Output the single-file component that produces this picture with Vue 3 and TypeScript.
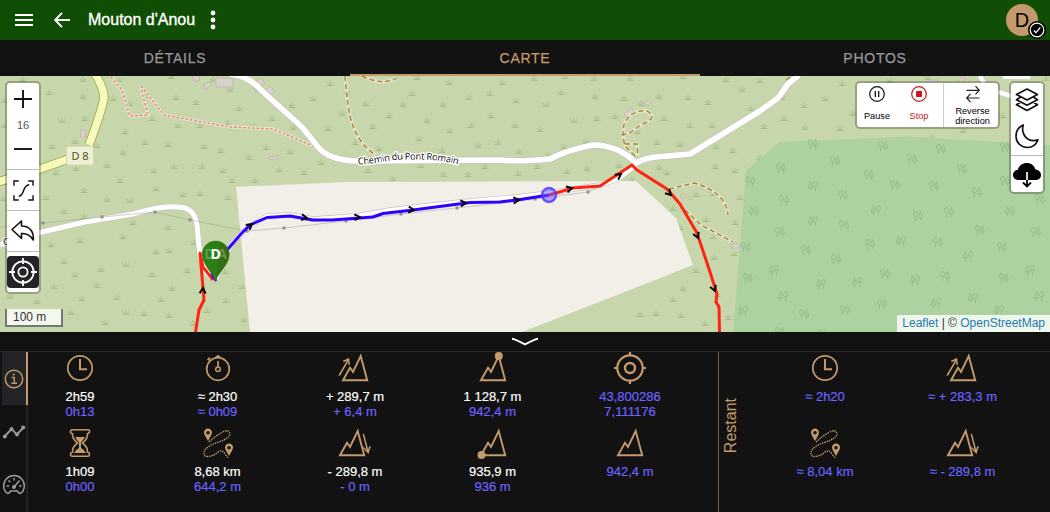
<script setup lang="ts">
type Point = [number, number]
type Arrow = [number, number, number]

interface Stat {
  icon: string
  total?: string
  current: string[]
}

const tabs = ['DÉTAILS', 'CARTE', 'PHOTOS']
const activeTab = 'CARTE'

const stats: Stat[] = [
  { icon: 'clock', total: '2h59', current: ['0h13'] },
  { icon: 'stopwatch', total: '≈ 2h30', current: ['≈ 0h09'] },
  { icon: 'ascent', total: '+ 289,7 m', current: ['+ 6,4 m'] },
  { icon: 'highest', total: '1 128,7 m', current: ['942,4 m'] },
  { icon: 'position', current: ['43,800286', '7,111176'] },
  { icon: 'hourglass', total: '1h09', current: ['0h00'] },
  { icon: 'distance', total: '8,68 km', current: ['644,2 m'] },
  { icon: 'descent', total: '- 289,8 m', current: ['- 0 m'] },
  { icon: 'lowest', total: '935,9 m', current: ['936 m'] },
  { icon: 'mountain', current: ['942,4 m'] },
]

const remaining: Stat[] = [
  { icon: 'clock', current: ['≈ 2h20'] },
  { icon: 'ascent', current: ['≈ + 283,3 m'] },
  { icon: 'distance', current: ['≈ 8,04 km'] },
  { icon: 'descent', current: ['≈ - 289,8 m'] },
]

const grass: Point[] = [
  [23, 79], [49, 92], [83, 79], [119, 79], [4, 100], [83, 96], [113, 98], [130, 103], [148, 95], [171, 76],
  [176, 97], [196, 102], [213, 79], [230, 89], [239, 108], [4, 125], [62, 120], [85, 118], [152, 118], [178, 125],
  [200, 125], [228, 122], [125, 131], [253, 125], [52, 146], [75, 141], [97, 145], [145, 142], [168, 144], [204, 146],
  [123, 152], [221, 150], [249, 157], [107, 165], [76, 168], [154, 170], [174, 166], [202, 166], [56, 172], [223, 170],
  [120, 180], [232, 180], [84, 190], [156, 188], [183, 194], [200, 193], [228, 197], [46, 197], [107, 199], [130, 200],
  [3, 198], [64, 211], [84, 216], [133, 222], [168, 227], [51, 244], [80, 240], [123, 236], [156, 251], [169, 250],
  [194, 242], [64, 261], [126, 264], [101, 269], [75, 274], [152, 274], [54, 286], [97, 285], [172, 288], [187, 270],
  [117, 297], [82, 298], [10, 296], [37, 301], [161, 299], [242, 286], [226, 300], [225, 271], [71, 312], [126, 312],
  [144, 313], [169, 315], [105, 322], [193, 323], [207, 310], [244, 319], [330, 83], [313, 98], [347, 92], [292, 105],
  [272, 118], [293, 127], [328, 128], [342, 113], [366, 103], [389, 115], [373, 126], [403, 104], [412, 93], [417, 77],
  [449, 82], [469, 97], [490, 93], [443, 104], [427, 120], [450, 130], [471, 125], [491, 115], [419, 138], [478, 145],
  [442, 150], [355, 142], [379, 148], [266, 147], [290, 151], [279, 169], [321, 162], [304, 172], [255, 180], [368, 170],
  [393, 178], [421, 165], [443, 174], [468, 174], [502, 82], [534, 78], [516, 100], [515, 125], [540, 129], [546, 104],
  [561, 92], [594, 78], [565, 76], [595, 96], [630, 78], [624, 98], [641, 103], [659, 96], [597, 118], [574, 120],
  [615, 116], [637, 131], [664, 118], [683, 76], [688, 97], [708, 102], [726, 79], [742, 89], [690, 125], [712, 125],
  [751, 108], [498, 142], [519, 151], [548, 154], [564, 146], [586, 141], [657, 142], [680, 144], [716, 146], [733, 150],
  [485, 166], [518, 173], [537, 166], [567, 171], [587, 168], [619, 165], [659, 167], [632, 179], [667, 172], [715, 166],
  [735, 170], [696, 194], [673, 208], [713, 193], [740, 197], [706, 219], [713, 236], [735, 222], [680, 227], [734, 253],
  [714, 257], [696, 270], [683, 288], [673, 299], [656, 313], [681, 315], [728, 317], [705, 323], [640, 314], [717, 294],
  [760, 80], [764, 126], [784, 118], [804, 105], [825, 98], [842, 83], [805, 127], [840, 128], [782, 97], [760, 157],
  [890, 80], [928, 77], [1046, 78], [1003, 115], [963, 130], [932, 137], [853, 113],
]

// Round crown on the left, pointed crown on the right
const mixedTrees: Point[] = [
  [843, 195], [895, 185], [934, 186], [977, 192], [1005, 181], [1040, 199], [918, 216], [949, 212], [844, 225],
  [980, 230], [1036, 232], [870, 244], [938, 242], [806, 250], [836, 259], [1002, 247], [885, 274], [945, 276],
  [1004, 278], [882, 304], [845, 310], [804, 314], [823, 334], [750, 181], [746, 247], [748, 278], [784, 200],
  [780, 232], [780, 332], [883, 146], [813, 144], [835, 161], [781, 168], [869, 175], [912, 159], [941, 149],
  [1005, 147], [962, 169],
]

// Pointed crown on the left, round crown on the right
const mirroredTrees: Point[] = [
  [813, 186], [876, 210], [1010, 211], [813, 221], [901, 241], [968, 256], [1030, 270], [915, 280], [857, 282],
  [821, 284], [973, 298], [1039, 296], [936, 303], [999, 310], [754, 211], [743, 311], [774, 270], [783, 296],
]

const pylons: Point[] = [
  [43, 223], [102, 217], [155, 212], [190, 220], [247, 231], [284, 228], [346, 221], [401, 214], [457, 208], [535, 199], [588, 192],
]

const arrows: Arrow[] = [
  [252, 224, -38], [307, 218, 8], [360, 217, -3], [414, 210, 5], [466, 203, -5], [519, 200, -5],
  [572, 188, -15], [621, 174, -35], [671, 195, 45], [698, 238, 68], [715, 291, 68], [203, 288, -86],
]
</script>

<template>
  <div class="app">
    <svg class="sprites" aria-hidden="true">
      <defs>
        <g id="grass" fill="none" stroke="#a9bf8c" stroke-width="1">
          <path d="M-3.5 2.5H3.5M0 2.5V-2.5M-.5 2L-3.2-.8M.5 2L3.2-.8" />
        </g>
        <g id="tree" fill="none" stroke="#93bf8a" stroke-width="1">
          <path d="M-2.5 5V1M2.5 5V2M.4 2L2.5-4.5L4.600 2Z" />
          <ellipse cx="-2.5" cy="-1.8" rx="2" ry="2.8" />
        </g>
        <path id="peak" d="M4 28.300L11 15.800L14 20L21.700 4L28.200 28.300Z" fill="none" stroke="currentColor" stroke-width="1.9" />
        <g id="clock" fill="none" stroke="currentColor">
          <circle cx="16" cy="16" r="12.2" stroke-width="1.7" />
          <path d="M16 7V17.3H23" stroke-width="2" />
        </g>
        <g id="stopwatch" fill="none" stroke="currentColor">
          <circle cx="16" cy="17" r="11.3" stroke-width="1.7" />
          <circle cx="16" cy="17.2" r="2.3" stroke-width="1.5" />
          <path d="M16 9V15M16 3V6M13.8 4.8H18.2M8.6 9L6.6 7M5.5 8L8 5.6" stroke-width="1.7" />
        </g>
        <g id="ascent">
          <use href="#peak" />
          <path d="M.2 23.500L9.200 8M4.300 9.500L9.500 7L10.200 13" fill="none" stroke="currentColor" stroke-width="1.5" />
        </g>
        <g id="descent">
          <use href="#peak" x="-3" />
          <path d="M24.300 7L29 24.500M24.500 20.500L29.200 25.500L31 19.300" fill="none" stroke="currentColor" stroke-width="1.5" />
        </g>
        <g id="highest">
          <use href="#peak" />
          <circle cx="21.8" cy="4" r="4" fill="currentColor" />
        </g>
        <g id="lowest">
          <use href="#peak" />
          <circle cx="4.5" cy="28" r="4" fill="currentColor" />
        </g>
        <use id="mountain" href="#peak" />
        <g id="position" fill="none" stroke="currentColor">
          <circle cx="16" cy="16" r="12.7" stroke-width="2.2" />
          <circle cx="16" cy="16" r="5" stroke-width="2.4" />
          <path d="M16 0V4M16 28V32M0 16H4M28 16H32" stroke-width="2.2" />
        </g>
        <g id="hourglass" fill="none" stroke="currentColor" stroke-width="1.6">
          <path d="M8 2.7H24Q26 3 25.5 5Q25 6.5 23.5 6.7Q24 12 18.5 16Q24 20 23.5 25.3Q25.5 25.5 25.5 27.5Q25.3 29.3 24 29.3H8Q6.3 29 6.4 27Q6.7 25.5 8.5 25.3Q8 20 13.5 16Q8 12 8.5 6.7Q6.5 6.5 6.4 5Q6.4 3 8 2.7Z" />
          <path d="M11 10H21Q19.5 13 17 15.2V21Q20 22.5 22 26H10Q12 22.5 15 21V15.2Q12.5 13 11 10Z" fill="currentColor" stroke="none" />
        </g>
        <g id="distance">
          <path
            d="M6 1.5A4 4 0 0 1 10 5.6C10 8 7.5 11 6 14C4.500 11 2 8 2 5.600A4 4 0 0 1 6 1.500ZM6 3.900A1.800 1.800 0 0 0 6 7.500A1.800 1.800 0 0 0 6 3.900Z"
            fill="currentColor"
            fill-rule="evenodd"
          />
          <path
            d="M27 16.500A4 4 0 0 1 31 20.600C31 23 28.500 26 27 29C25.500 26 23 23 23 20.600A4 4 0 0 1 27 16.500ZM27 18.900A1.800 1.800 0 0 0 27 22.500A1.800 1.800 0 0 0 27 18.900Z"
            fill="currentColor"
            fill-rule="evenodd"
          />
          <path
            d="M7 15Q12 10 19 6Q27 1 28 7Q28 11 17 15Q4 19 2 25Q1 31 9 29Q13 28 16 25Q20 22 23 27Q25 30 27 31"
            fill="none"
            stroke="currentColor"
            stroke-width="1.300"
            stroke-dasharray="1.500 .9"
          />
        </g>
      </defs>
    </svg>

    <header class="toolbar">
      <svg class="menu-icon" viewBox="0 0 18 12"><path d="M0 1H18M0 6H18M0 11H18" stroke="#fff" stroke-width="2" /></svg>
      <svg class="back-icon" viewBox="0 0 16 16"><path d="M8 .8L1.200 8L8 15.200M1.500 8H16" fill="none" stroke="#fff" stroke-width="1.900" /></svg>
      <h1>Mouton d'Anou</h1>
      <svg class="more-icon" viewBox="0 0 6 20">
        <g fill="#fff"><circle cx="3" cy="3" r="2.400" /><circle cx="3" cy="10" r="2.400" /><circle cx="3" cy="17" r="2.400" /></g>
      </svg>
      <div class="avatar">
        D
        <svg class="avatar-badge" viewBox="0 0 18 18">
          <circle cx="9" cy="9" r="9" fill="#000" />
          <circle cx="9" cy="9" r="6.800" fill="none" stroke="#fff" stroke-width="1.200" />
          <path d="M5.800 9.500L8 11.700L12.300 6.500" fill="none" stroke="#fff" stroke-width="1.200" />
        </svg>
      </div>
    </header>

    <nav class="tabs">
      <div v-for="tab in tabs" :key="tab" class="tab" :class="{ active: tab === activeTab }">{{ tab }}</div>
    </nav>

    <main class="map">
      <svg class="map-canvas" viewBox="0 76 1050 256">
        <rect y="76" width="1050" height="256" fill="#c8d7ab" />
        <use v-for="([x, y], i) in grass" :key="`g${i}`" href="#grass" :x="x" :y="y" />
        <path d="M236 187L345 182L636 181L676 218L693 265L640 286L522 332H250Z" fill="#f2efe9" />
        <path d="M746 171L779 142L907 136.500L1050 145V332H733Z" fill="#aed1a0" />
        <use v-for="([x, y], i) in mixedTrees" :key="`t${i}`" href="#tree" :x="x" :y="y" />
        <use v-for="([x, y], i) in mirroredTrees" :key="`m${i}`" href="#tree" :transform="`translate(${x} ${y}) scale(-1 1)`" />

        <g fill="#d9d0c9" stroke="#c3b3ad" stroke-width=".8">
          <path d="M216 78H233V87H216ZM192 76H199L200 80L195 82ZM203 85L210 82L212 85L205 89ZM256 82L260 78L265 83L260 86ZM266 90L270 86L275 91L270 95ZM80.500 130H85.500V137H80.500ZM269 157L278 155.500V158.500L270 160ZM624 114L631 108L634 112L627 117ZM644 103L649 100L651 103L646 106ZM681 194H685V198H681ZM731 244H739V248H731ZM688 198L690 197L692 199L690 200ZM929 80H938V84H929ZM961 76H965L962 83H959ZM254 89L256 88L258 91L256 92Z" />
        </g>

        <g fill="none" stroke="#e0e5cc" stroke-width="3.300" stroke-linejoin="round">
          <path d="M111 77L122 90L130 116L148 115L142 93V87L164 115L230 127L273 129L315 147" />
          <path d="M345 76Q347 101 350 116Q357 144 376 155M362 76Q382 86 397 78M635 156L625 146Q621 132 625 122Q633 109 647 111Q658 117 645 123Q637 127 630 133L622 135M625 144H637L638 156M669 189L694 183Q726 192 728 215M685 210L701 225L733 242" />
        </g>
        <path d="M111 77L122 90L130 116L148 115L142 93V87L164 115L230 127L273 129L315 147" fill="none" stroke="#f77d72" stroke-width="1.400" stroke-dasharray="2.500 2" />
        <path d="M345 76Q347 101 350 116Q357 144 376 155M362 76Q382 86 397 78M635 156L625 146Q621 132 625 122Q633 109 647 111Q658 117 645 123Q637 127 630 133L622 135M625 144H637L638 156M669 189L694 183Q726 192 728 215M685 210L701 225L733 242M786 80L790 77" fill="none" stroke="#ad822b" stroke-width="1.400" stroke-dasharray="5 3" />

        <g fill="none" stroke-linejoin="round">
          <g stroke="#c4c3bc">
            <path d="M0 245L40 232.500L85 222L133 214C155 208 168 205 183 207.500C195 210 197 221 197.500 230C199 248 200 261 205 270Q209 277 216 280" stroke-width="6.200" />
            <path d="M216 280Q218 266 228 250Q238 232 267 216L290 215L313 219L357 216L390 210L460 202L517 197L549 193L600 185L618 179L636 165" stroke-width="5.400" />
            <path d="M230 74L240 76Q252 80 261 90L302 127L318 147Q330 162 365 161L500 160Q520 162 550 159Q567 150 593 145Q618 145 636 163Q645 158 656 157L690 154L760 111L778 98L788 84L799 75" stroke-width="7" />
            <path d="M980 76L984 83M998 92L1014 97" stroke-width="6" />
          </g>
          <g stroke="#fff">
            <path d="M0 245L40 232.500L85 222L133 214C155 208 168 205 183 207.500C195 210 197 221 197.500 230C199 248 200 261 205 270Q209 277 216 280" stroke-width="5" />
            <path d="M216 280Q218 266 228 250Q238 232 267 216L290 215L313 219L357 216L390 210L460 202L517 197L549 193L600 185L618 179L636 165" stroke-width="4.200" />
            <path d="M230 74L240 76Q252 80 261 90L302 127L318 147Q330 162 365 161L500 160Q520 162 550 159Q567 150 593 145Q618 145 636 163Q645 158 656 157L690 154L760 111L778 98L788 84L799 75" stroke-width="5.600" />
            <path d="M980 76L984 83M998 92L1014 97M1003 76.500L1030 77" stroke-width="4.600" />
          </g>
          <path d="M95 74Q104 88 104 98Q102 110 89 145M70 158.500L40 169L-2 182" stroke="#a2a83c" stroke-width="9.200" />
          <path d="M95 74Q104 88 104 98Q102 110 89 145M70 158.500L40 169L-2 182" stroke="#f7fabf" stroke-width="7.600" />
          <path d="M0 227L43 223L102 217L155 212L190 220L247 231L284 228L346 221L401 214L457 208L535 199L588 192L602 186" stroke="#999" stroke-opacity=".6" stroke-width=".8" />
        </g>
        <rect v-for="([x, y], i) in pylons" :key="`p${i}`" :x="x - 1.5" :y="y - 1.5" width="3" height="3" fill="#928f8f" />

        <rect x="66.500" y="146.500" width="27" height="18.500" rx="1.500" fill="#eef0d5" stroke="#d4d9a6" />
        <text x="80" y="160" class="road-ref">D 8</text>
        <path id="street-name" d="M358 164.500C378 164 388 159.500 405 159.500S440 159 462 165.500" fill="none" />
        <text class="street"><textPath href="#street-name" textLength="101">Chemin du Pont Romain</textPath></text>
        <text x="3" y="245" class="street">C</text>

        <g fill="none" stroke-width="3" stroke-linejoin="round">
          <path d="M195.500 332L199 310L204 300L200 253L203 267L213 280M549 195L573 188L600 186L632 165L637 170L667 189L680 204L697 233L710 272L717 294L716 302L719 307L719.500 332" stroke="#ff2412" />
          <path d="M216 281L212 274L228 249L240 235L250 225L267 217.500L290 216L313 220H332L373 217L383 213.500L413 210L470 202.500L500 202L517 200L549 195" stroke="#3300ff" />
        </g>
        <g v-for="([x, y, angle], i) in arrows" :key="`a${i}`" :transform="`translate(${x} ${y}) rotate(${angle})`">
          <path d="M-5.500 -3L0 0L-5.500 3" fill="none" stroke="#000" stroke-width="1.900" />
        </g>
        <circle cx="549" cy="195" r="7" fill="#6b55ff" fill-opacity=".5" stroke="#4a35ff" stroke-opacity=".8" stroke-width="2.400" />

        <path d="M215.500 282C213 272 202 265 202 254.500A13.700 13.700 0 0 1 229.400 254.500C229.400 265 218 272 215.500 282Z" fill="#2a8017" />
        <path d="M220 243A13.700 13.700 0 0 1 229.400 254.500C229.400 265 220 270 216 279Z" fill="#3c6312" opacity=".6" />
        <text x="209.500" y="259" class="pin ghost">D</text>
        <text x="222" y="259" class="pin ghost">A</text>
        <text x="215.800" y="259" class="pin">D</text>
      </svg>

      <div class="control left-control">
        <div class="cell zoom-in"><svg viewBox="0 0 18 18"><path d="M0 9H18M9 0V18" stroke="#111" stroke-width="1.900" /></svg></div>
        <div class="cell zoom-level">16</div>
        <div class="cell zoom-out"><svg viewBox="0 0 18 18"><path d="M0 9H18" stroke="#111" stroke-width="1.900" /></svg></div>
        <div class="cell fit ruled">
          <svg viewBox="0 0 22 22" fill="none" stroke="#111" stroke-width="1.500">
            <path d="M1 6V1H6M16 1H21V6M21 16V21H16M6 21H1V16M6 17C13 16 9 6 17 5" />
          </svg>
        </div>
        <div class="cell undo ruled">
          <svg viewBox="0 0 24 22"><path d="M1 9.500L10.500 1V6C19 6 23 12 22.300 20Q18 13 10.500 13.500V18.500Z" fill="none" stroke="#111" stroke-width="1.600" stroke-linejoin="round" /></svg>
        </div>
        <div class="cell locate ruled">
          <span class="locate-button">
            <svg viewBox="0 0 28 28" fill="none" stroke="#fff">
              <circle cx="14" cy="14" r="10.700" stroke-width="1.800" />
              <circle cx="14" cy="14" r="4.600" stroke-width="1.800" />
              <path d="M14 0V6M14 22V28M0 14H6M22 14H28" stroke-width="1.800" />
            </svg>
          </span>
        </div>
      </div>

      <div class="scale">100 m</div>

      <div class="control trace-control">
        <div class="trace-action">
          <svg viewBox="0 0 16 16"><circle cx="8" cy="8" r="7.300" fill="none" stroke="#111" stroke-width="1.200" /><path d="M6.300 5V11M9.700 5V11" stroke="#111" stroke-width="1.300" /></svg>
          <span>Pause</span>
        </div>
        <div class="trace-action stop">
          <svg viewBox="0 0 16 16"><circle cx="8" cy="8" r="7.300" fill="none" stroke="#c5161b" stroke-width="1.200" /><rect x="5" y="5" width="6" height="6" rx="1" fill="#c5161b" /></svg>
          <span>Stop</span>
        </div>
        <div class="trace-action reverse">
          <svg viewBox="0 0 16 16" fill="none" stroke="#222" stroke-width="1.200"><path d="M1.500 4.300H14M10.500 .2L14.300 4.300L10.500 8.400M14.500 12H2M5.500 7.900L1.700 12L5.500 16.100" /></svg>
          <span>Reverse<br />direction</span>
        </div>
      </div>

      <div class="control layers-control">
        <div class="layer-cell">
          <svg viewBox="0 0 24 24" fill="none" stroke="#111" stroke-width="1.700" stroke-linejoin="round">
            <path d="M12 1L22.500 6.500L12 12L1.500 6.500ZM5 9.500L1.500 11.700L12 17.200L22.500 11.700L19 9.500M5 14.500L1.500 16.800L12 22.500L22.500 16.800L19 14.500" />
          </svg>
        </div>
        <div class="layer-cell">
          <svg viewBox="0 0 24 24"><path d="M8.300 1C7.500 3 7.300 5 8 8C9.500 14 15.500 18.500 23 15.800C21 21 17.500 23.500 12.500 23.500C6 23.500 1 18.500 1 12.500C1 7 3.500 3 8.300 1Z" fill="none" stroke="#111" stroke-width="1.700" stroke-linejoin="round" /></svg>
        </div>
        <div class="layer-cell download">
          <svg viewBox="0 0 28 26">
            <path d="M14 1C18 1 21.500 3.500 22.200 7.300C25.500 7.700 28 10 28 13C28 16.500 25.500 18 22.500 18H5.500C2.500 18 0 16 0 13C0 10 2.300 8 4.800 7.700C6 3.500 9.500 1 14 1Z" fill="#000" />
            <path d="M14 10V19" stroke="#fff" stroke-width="1.700" />
            <path d="M14 18V24M10 20.500L14 24.500L18 20.500" fill="none" stroke="#000" stroke-width="1.800" />
          </svg>
        </div>
      </div>

      <div class="attribution"><a>Leaflet</a> | © <a>OpenStreetMap</a></div>
    </main>

    <section class="panel">
      <div class="handle"><svg viewBox="0 0 26 8"><path d="M0 .8Q2 .8 13 6.300Q24 .8 26 .8" fill="none" stroke="#fff" stroke-width="1.900" /></svg></div>
      <div class="panel-body">
        <aside class="side-tabs">
          <div class="side-tab active">
            <svg viewBox="0 0 22 22" fill="none" stroke="currentColor"><circle cx="11" cy="11" r="8.700" stroke-width="1.400" /><path d="M8.700 9.500H11.300V15.300M8.300 15.300H14" stroke-width="1.400" /><circle cx="10.800" cy="6.500" r="1.100" fill="currentColor" stroke="none" /></svg>
          </div>
          <div class="side-tab">
            <svg viewBox="0 0 22 22" fill="currentColor"><path d="M1.500 15.500L8.500 8L14 13.500L20.500 6.500" fill="none" stroke="currentColor" stroke-width="1.900" /><circle cx="1.800" cy="15.400" r="2" /><circle cx="8.500" cy="8" r="2" /><circle cx="14" cy="13.500" r="2" /><circle cx="20.200" cy="6.600" r="2" /></svg>
          </div>
          <div class="side-tab">
            <svg viewBox="0 0 22 22" fill="none" stroke="currentColor" stroke-width="1.500">
              <path d="M4.500 19.500C1.500 17.500 .7 14.500 .7 11.800A10.300 10.300 0 0 1 21.300 11.800C21.300 14.500 20.500 17.500 17.500 19.500C15.500 19.500 15 18 14.500 17H7.500C7 18 6.500 19.500 4.500 19.500Z" />
              <path d="M11 4V6.500M3.500 12H6M16 12H18.500M5.500 6.500L7.300 8.300M11 13L16.500 6.500" /><circle cx="11" cy="13" r="1.300" fill="currentColor" />
            </svg>
          </div>
        </aside>
        <div class="stats">
          <div v-for="(stat, i) in stats" :key="i" class="stat">
            <svg viewBox="0 0 32 32"><use :href="`#${stat.icon}`" /></svg>
            <span v-if="stat.total" class="total">{{ stat.total }}</span>
            <span v-for="value in stat.current" :key="value">{{ value }}</span>
          </div>
        </div>
        <div class="remaining">
          <div class="remaining-title"><span>Restant</span></div>
          <div class="stats remaining-stats">
            <div v-for="(stat, i) in remaining" :key="i" class="stat">
              <svg viewBox="0 0 32 32"><use :href="`#${stat.icon}`" /></svg>
              <span v-for="value in stat.current" :key="value">{{ value }}</span>
            </div>
          </div>
        </div>
      </div>
    </section>
  </div>
</template>

<style>
body {
  background: #121212;
  overflow: hidden;
}
</style>

<style scoped>
.app {
  display: flex;
  flex-direction: column;
  width: 1050px;
  height: 512px;
  overflow: hidden;
  background: #121212;
  color: #fff;
  font-family: "Liberation Sans", Arial, sans-serif;
}
.app svg {
  display: block;
  flex: none;
  overflow: visible;
}
.app .sprites {
  position: absolute;
  width: 0;
  height: 0;
}
.toolbar {
  display: flex;
  align-items: center;
  flex: none;
  height: 40px;
  padding: 0 12px 0 15px;
  box-sizing: border-box;
  background: #104e05;
}
.menu-icon { width: 18px; height: 12px; }
.back-icon { width: 16px; height: 16px; margin-left: 21px; }
h1 {
  margin: 0 0 0 18px;
  width: 108px;
  font: 500 16px/20px "Liberation Sans", Arial, sans-serif;
  -webkit-text-stroke: 0.35px #fff;
  white-space: nowrap;
}
.more-icon { width: 6px; height: 20px; margin-left: 14px; }
.avatar {
  position: relative;
  width: 32px;
  height: 32px;
  margin-left: auto;
  border-radius: 50%;
  background: #c49a6c;
  color: #000;
  font-size: 20px;
  line-height: 32px;
  text-align: center;
}
.avatar-badge {
  position: absolute;
  left: 22px;
  top: 17px;
  width: 18px;
  height: 18px;
}
.tabs { display: flex; flex: none; height: 36px; }
.tab {
  flex: 1;
  box-sizing: border-box;
  border-bottom: 2px solid transparent;
  color: #999;
  font-size: 14px;
  line-height: 37px;
  letter-spacing: 0.75px;
  text-align: center;
  -webkit-text-stroke: 0.25px currentColor;
}
.tab.active { border-color: #c49a6c; color: #c49a6c; }
.map { position: relative; flex: none; height: 256px; overflow: hidden; }
.map-canvas { width: 1050px; height: 256px; }
.road-ref { font: 11px "Noto Sans", sans-serif; fill: #4d5515; text-anchor: middle; }
.street {
  font: 9.5px "Noto Sans", sans-serif;
  fill: #111;
  stroke: #fff;
  stroke-width: 2.5px;
  paint-order: stroke;
}
.pin { font: bold 14px "Open Sans", sans-serif; fill: #fff; text-anchor: middle; }
.pin.ghost { fill-opacity: 0.25; }
.control {
  position: absolute;
  box-sizing: border-box;
  border: 2px solid rgba(0, 0, 0, 0.25);
  border-radius: 5px;
  background: #fff;
  background-clip: padding-box;
  color: #000;
}
.left-control { left: 5px; top: 5px; width: 36px; height: 213px; }
.cell { display: flex; align-items: center; justify-content: center; box-sizing: border-box; }
.ruled { border-top: 1px solid #bbb; }
.zoom-in { height: 32px; }
.zoom-in svg, .zoom-out svg { width: 18px; height: 18px; }
.zoom-level { height: 20px; color: #555; font-size: 11px; }
.zoom-out { height: 34px; padding-bottom: 7px; }
.fit { height: 41px; }
.fit svg { width: 21px; height: 21px; }
.undo { height: 41px; }
.undo svg { width: 24px; height: 22px; }
.locate { height: 41px; }
.locate-button {
  display: grid;
  place-items: center;
  width: 32px;
  height: 32px;
  border-radius: 4px;
  background: #222428;
}
.locate-button svg { width: 28px; height: 28px; }
.scale {
  position: absolute;
  left: 5px;
  top: 233px;
  width: 58px;
  height: 18px;
  box-sizing: border-box;
  padding-left: 6px;
  border: 2px solid #777;
  border-top: 0;
  background: rgba(255, 255, 255, 0.8);
  color: #333;
  font-size: 12px;
  line-height: 17px;
}
.trace-control { display: flex; left: 855px; top: 5px; width: 145px; height: 48px; }
.trace-action {
  display: flex;
  flex-direction: column;
  align-items: center;
  box-sizing: border-box;
  width: 40px;
  padding-top: 3px;
  font-size: 9.2px;
  line-height: 10px;
  text-align: center;
}
.trace-action svg { width: 16px; height: 16px; }
.trace-action span { padding-top: 9px; }
.trace-action.stop { width: 46px; padding-right: 2px; color: #c5161b; }
.trace-action.reverse { flex: 1; padding-left: 3px; border-left: 1px solid #ccc; }
.trace-action.reverse span { padding-top: 4px; }
.layers-control { left: 1009px; top: 5px; width: 36px; height: 113px; }
.layer-cell { display: grid; place-items: center; box-sizing: border-box; height: 36px; padding-bottom: 2px; }
.layer-cell svg { width: 24px; height: 24px; }
.layer-cell.download { height: 37px; padding: 1px 0 0; border-top: 1px solid #bbb; }
.layer-cell.download svg { width: 28px; height: 26px; }
.attribution {
  position: absolute;
  right: 0;
  bottom: 0;
  padding: 0 5px;
  background: rgba(255, 255, 255, 0.8);
  color: #333;
  font-size: 12px;
  line-height: 17px;
  white-space: nowrap;
}
.attribution a { color: #1f7cb0; }
.panel { display: flex; flex-direction: column; flex: 1; min-height: 0; }
.handle {
  display: flex;
  justify-content: center;
  flex: none;
  height: 20px;
  box-sizing: border-box;
  padding-top: 6px;
  border-bottom: 1px solid #27292c;
}
.handle svg { width: 26px; height: 8px; }
.panel-body { display: flex; flex: 1; min-height: 0; }
.side-tabs { flex: none; width: 28px; }
.side-tab {
  display: grid;
  place-items: center;
  box-sizing: border-box;
  height: 53.33px;
  margin-left: 2px;
  border-right: 2px solid #222428;
  color: #999aa0;
}
.side-tab svg { width: 22px; height: 22px; }
.side-tab.active { border-color: #c49a6c; background: #222428; color: #c49a6c; }
.stats {
  display: grid;
  flex: none;
  grid-template-columns: repeat(5, 104px);
  grid-auto-rows: 67px;
  gap: 8px 33.5px;
  width: 690px;
}
.stat {
  display: flex;
  flex-direction: column;
  align-items: center;
  color: #6b62ff;
  font-size: 13px;
  line-height: 15px;
  white-space: nowrap;
  -webkit-text-stroke: 0.2px currentColor;
}
.stat svg { width: 32px; height: 32px; margin-bottom: 5px; color: #c49a6c; }
.stat .total { color: #fff; }
.remaining { display: flex; flex: 1; border-left: 1px solid #77603f; }
.remaining-title {
  display: grid;
  place-items: center;
  width: 24px;
  margin-right: 30px;
  padding-bottom: 12px;
  color: #c49a6c;
  font-size: 16px;
}
.remaining-title span { writing-mode: vertical-rl; transform: rotate(180deg); }
.stats.remaining-stats { grid-template-columns: repeat(2, 104px); width: auto; }
</style>
